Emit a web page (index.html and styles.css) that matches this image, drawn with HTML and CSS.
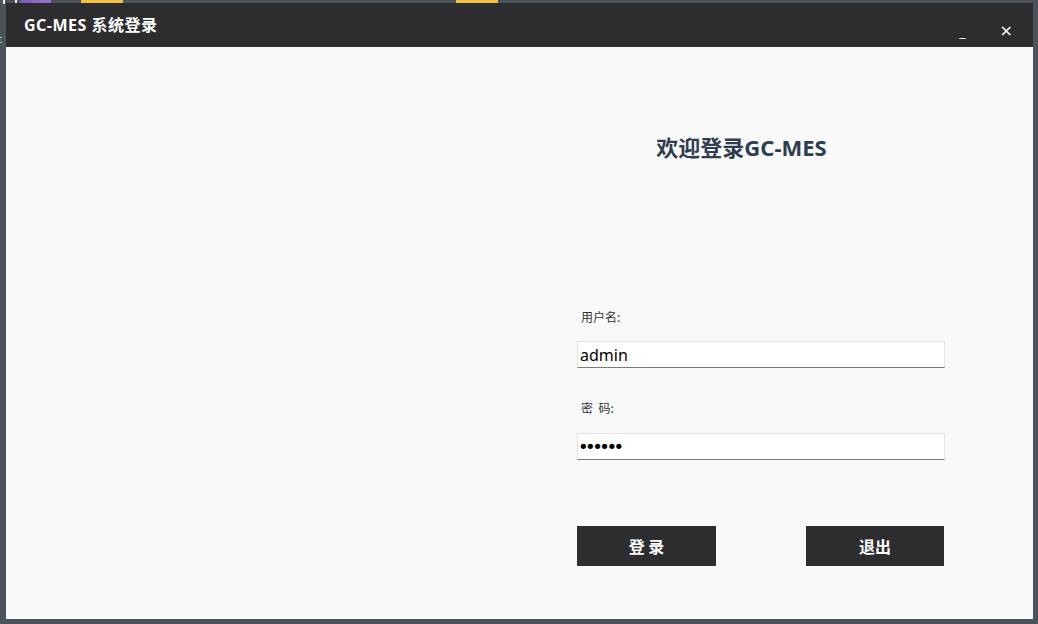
FILE: index.html
```html
<!DOCTYPE html>
<html lang="zh-CN">
<head>
<meta charset="utf-8">
<title>GC-MES 系统登录</title>
<link rel="stylesheet" href="styles.css">
</head>
<body>
<div class="desktop">
  <span class="dk-icon dk-box"></span>
  <span class="dk-icon dk-purple"></span>
  <span class="dk-icon dk-yellow1"></span>
  <span class="dk-icon dk-yellow2"></span>
  <span class="dk-text">t</span>

  <div class="window">
    <div class="titlebar">
      <div class="title">GC-MES 系统登录</div>
      <div class="controls">
        <span class="ctl ctl-min">_</span>
        <span class="ctl ctl-close">×</span>
      </div>
    </div>
    <div class="content">
      <div class="side"></div>
      <div class="panel">
        <h1 class="welcome">欢迎登录GC-MES</h1>
        <label class="label label-user" for="user">用户名:</label>
        <input class="field" id="user" type="text" value="admin">
        <label class="label label-pass" for="pass">密&nbsp;&nbsp;码:</label>
        <input class="field" id="pass" type="password" value="123456">
        <div class="actions">
          <button class="btn" type="button">登 录</button>
          <button class="btn btn-exit" type="button">退出</button>
        </div>
      </div>
    </div>
  </div>
</div>
</body>
</html>
```
FILE: styles.css
```css
html, body {
  margin: 0;
  padding: 0;
  height: 100%;
}
body {
  background: #4b5259;
  font-family: "Noto Sans", "Noto Sans CJK SC", sans-serif;
  overflow: hidden;
}
.desktop {
  position: relative;
  width: 1038px;
  height: 624px;
}
.dk-icon {
  position: absolute;
  top: 0;
  height: 3px;
}
.dk-box {
  left: 3px;
  width: 14px;
  height: 4px;
  border-left: 2px solid #f0f0f0;
  border-right: 2px solid #f0f0f0;
  box-sizing: border-box;
}
.dk-purple {
  left: 20px;
  width: 31px;
  background: linear-gradient(90deg, #7c5bb8, #9a6fd6);
}
.dk-yellow1 {
  left: 81px;
  width: 42px;
  background: #f6c13f;
}
.dk-yellow2 {
  left: 456px;
  width: 42px;
  background: #f6c13f;
}
.dk-text {
  position: absolute;
  left: -2px;
  top: 33px;
  font-size: 11px;
  color: #8fd0e0;
  font-family: "DejaVu Sans", sans-serif;
}
.window {
  position: absolute;
  left: 6px;
  top: 3px;
  width: 1027px;
  height: 616px;
  display: flex;
  flex-direction: column;
  background: #f9f9f9;
}
.titlebar {
  height: 44px;
  flex: none;
  background: #2d2d30;
  display: flex;
  align-items: center;
  justify-content: space-between;
  color: #fff;
}
.title {
  padding-left: 18px;
  font-size: 16px;
  font-weight: 700;
  letter-spacing: 0.5px;
  margin-top: -2px;
}
.controls {
  display: flex;
  align-items: center;
  height: 100%;
}
.ctl {
  color: #fff;
  font-family: "DejaVu Sans", sans-serif;
}
.ctl-min {
  font-size: 12px;
  margin-top: 14px;
  margin-right: 34px;
}
.ctl-close {
  font-size: 16px;
  margin-top: 10px;
  margin-right: 20px;
}
.content {
  flex: 1;
  display: grid;
  grid-template-columns: 571px 368px;
  background: #f9f9f9;
}
.panel {
  display: flex;
  flex-direction: column;
  padding-top: 86px;
}
.welcome {
  margin: 0;
  padding-right: 39px;
  text-align: center;
  font-size: 22px;
  line-height: 28px;
  font-weight: 700;
  color: #2f3d50;
}
.label {
  font-family: "Noto Sans CJK SC", sans-serif;
  font-size: 12px;
  line-height: 16px;
  color: #333;
  padding-left: 4px;
}
.label-user {
  margin-top: 148px;
}
.label-pass {
  margin-top: 32px;
}
.field {
  margin: 16px 0 0 0;
  height: 27px;
  box-sizing: border-box;
  border: 1px solid #e3e3e3;
  border-bottom: 1px solid #7a7a7a;
  background: #fff;
  padding: 0 2px;
  font-family: "Noto Sans", sans-serif;
  font-size: 16px;
  color: #000;
  outline: none;
}
#pass {
  margin-top: 17px;
  font-family: "DejaVu Sans", sans-serif;
  font-size: 18px;
  letter-spacing: -3.5px;
  padding-left: 0;
}
.actions {
  margin-top: 66px;
  display: flex;
  justify-content: space-between;
}
.btn {
  width: 139px;
  height: 40px;
  border: none;
  background: #2d2d30;
  color: #fff;
  font-family: "Noto Sans CJK SC", sans-serif;
  font-size: 16px;
  font-weight: 700;
  padding: 0;
}
.btn-exit {
  width: 138px;
  margin-right: 1px;
}
```
